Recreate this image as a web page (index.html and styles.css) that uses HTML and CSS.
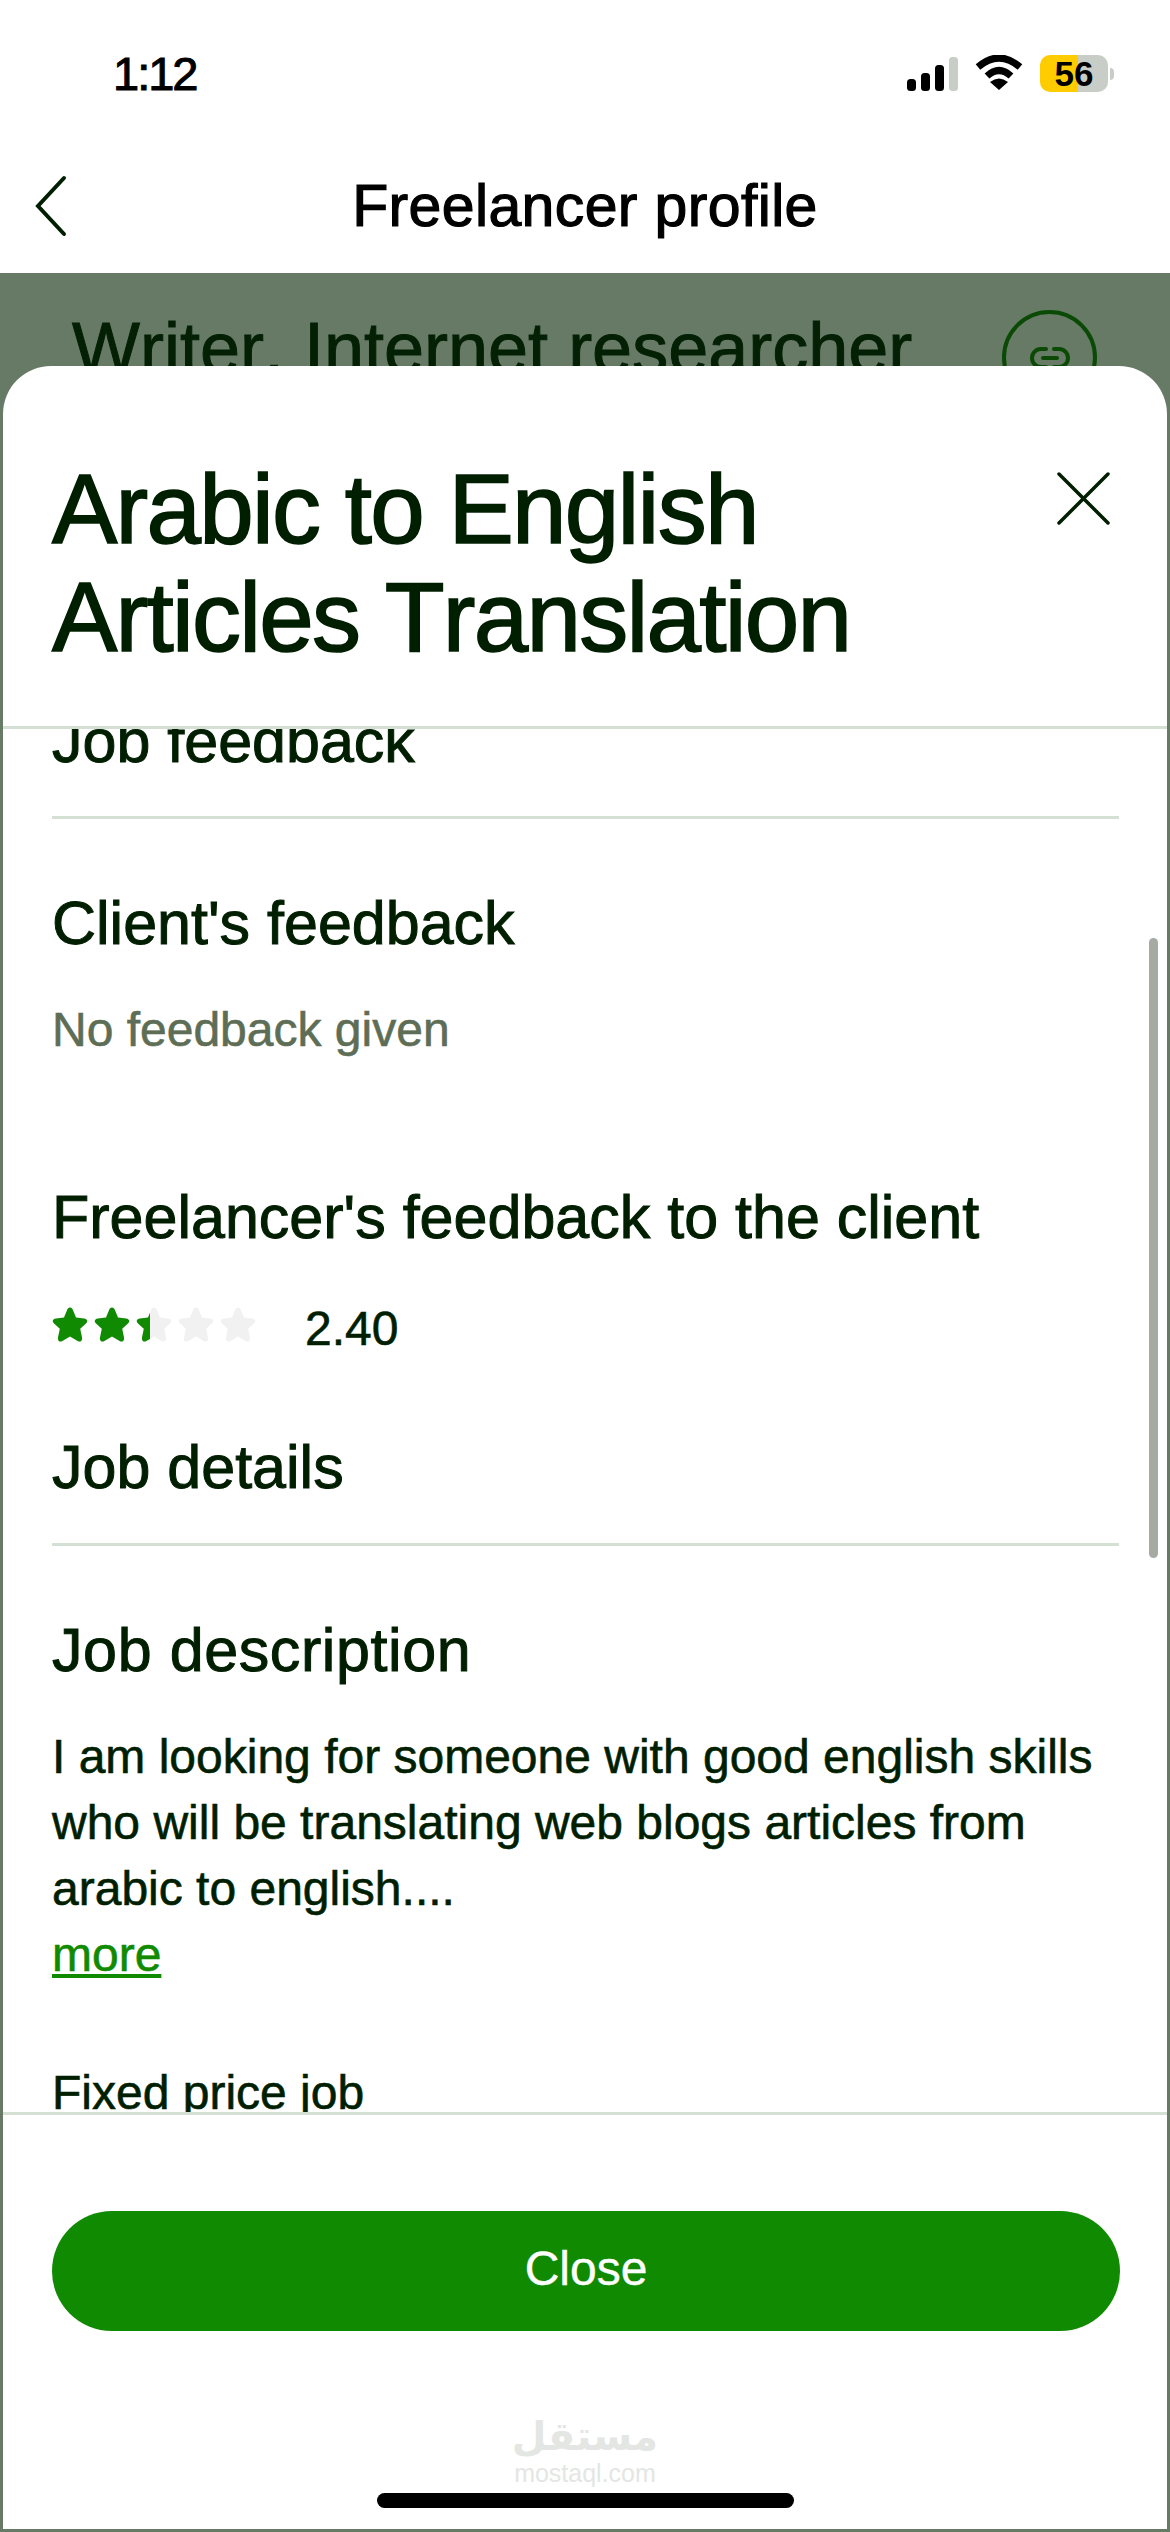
FILE: index.html
```html
<!DOCTYPE html>
<html lang="en">
<head>
    <meta charset="UTF-8">
    <meta name="viewport" content="width=device-width, initial-scale=1.0">
    <title>Freelancer profile</title>
    <link rel="stylesheet" href="styles.css">
</head>
<body>
    <div class="screen">
        <div class="status-bar">
            <span class="time">1:12</span>
            <div class="status-icons">
                <svg class="signal" width="51" height="34" viewBox="0 0 51 34">
                    <rect x="0" y="22" width="9" height="12" rx="3.5" fill="#000"/>
                    <rect x="14" y="16" width="9" height="18" rx="3.5" fill="#000"/>
                    <rect x="28" y="8" width="9" height="26" rx="3.5" fill="#000"/>
                    <rect x="42" y="0" width="9" height="34" rx="3.5" fill="#c8cdc7"/>
                </svg>
                <svg class="wifi" width="48" height="36" viewBox="0 0 48 36">
                    <path d="M3 12 Q24 -6 45 12" fill="none" stroke="#000" stroke-width="7" stroke-linejoin="round"/>
                    <path d="M12 21 Q24 10 36 21" fill="none" stroke="#000" stroke-width="7"/>
                    <path d="M24 35 L15 27 Q24 20 33 27 Z" fill="#000"/>
                </svg>
                <div class="battery">
                    <div class="battery-body"><span class="battery-level">56</span></div>
                    <div class="battery-cap"></div>
                </div>
            </div>
        </div>
        <div class="nav-bar">
            <svg class="back" width="32" height="62" viewBox="0 0 32 62">
                <path d="M29 3 L3 31 L29 59" fill="none" stroke="#001e00" stroke-width="4" stroke-linecap="round"/>
            </svg>
            <h2 class="nav-title">Freelancer profile</h2>
        </div>

        <div class="backdrop">
            <div class="backdrop-row">
                <h1 class="backdrop-title">Writer, Internet researcher</h1>
                <div class="link-circle">
                    <svg width="40" height="24" viewBox="0 0 40 24">
                        <path d="M16 3 H11 A9 9 0 0 0 11 21 H16 M24 3 H29 A9 9 0 0 1 29 21 H24 M13 12 H27" fill="none" stroke="#0a4a05" stroke-width="4" stroke-linecap="round"/>
                    </svg>
                </div>
            </div>
        </div>
        <div class="backdrop-peek">Namaste</div>

        <div class="sheet">
            <div class="sheet-header">
                <h1 class="sheet-title">Arabic to English Articles Translation</h1>
                <svg class="close-x" width="53" height="53" viewBox="0 0 53 53">
                    <path d="M2 2 L51 51 M51 2 L2 51" fill="none" stroke="#001e00" stroke-width="3.5" stroke-linecap="round"/>
                </svg>
            </div>

            <div class="sheet-body">
                <div class="scroll-content">
                    <div class="section-head">Job feedback</div>

                    <h3 class="sub-head first">Client's feedback</h3>
                    <p class="muted">No feedback given</p>

                    <h3 class="sub-head second">Freelancer's feedback to the client</h3>
                    <div class="rating">
                        <div class="stars">
                            <div class="stars-row stars-empty">
                                <svg viewBox="0 0 36 36"><use href="#star"/></svg>
                                <svg viewBox="0 0 36 36"><use href="#star"/></svg>
                                <svg viewBox="0 0 36 36"><use href="#star"/></svg>
                                <svg viewBox="0 0 36 36"><use href="#star"/></svg>
                                <svg viewBox="0 0 36 36"><use href="#star"/></svg>
                            </div>
                            <div class="stars-fill" style="width: 48%">
                                <div class="stars-row">
                                    <svg viewBox="0 0 36 36"><use href="#star"/></svg>
                                    <svg viewBox="0 0 36 36"><use href="#star"/></svg>
                                    <svg viewBox="0 0 36 36"><use href="#star"/></svg>
                                    <svg viewBox="0 0 36 36"><use href="#star"/></svg>
                                    <svg viewBox="0 0 36 36"><use href="#star"/></svg>
                                </div>
                            </div>
                        </div>
                        <span class="rating-value">2.40</span>
                    </div>

                    <div class="section-head details">Job details</div>

                    <h3 class="sub-head first job-desc">Job description</h3>
                    <p class="description">I am looking for someone with good english skills who will be translating web blogs articles from arabic to english....</p>
                    <a class="more" href="#">more</a>
                    <p class="job-type">Fixed price job</p>
                </div>
                <div class="scrollbar"></div>
            </div>

            <div class="sheet-footer">
                <button class="close-btn" type="button">Close</button>
                <div class="watermark">
                    <span class="wm-arabic" lang="ar" dir="rtl">مستقل</span>
                    <span class="wm-latin">mostaql.com</span>
                </div>
                <div class="home-indicator"></div>
            </div>
        </div>
    </div>

    <svg width="0" height="0" class="defs">
        <defs>
            <path id="star" d="M18 0.5 C19.5 0.5 20.3 1.6 21 3.2 L24 10.6 L32 11.4 C35 11.7 36.4 14.2 34.2 16.2 L28.2 21.8 L30 30.4 C30.6 33.6 28.4 35.6 25.6 34 L18 29.6 L10.4 34 C7.6 35.6 5.4 33.6 6 30.4 L7.8 21.8 L1.8 16.2 C-0.4 14.2 1 11.7 4 11.4 L12 10.6 L15 3.2 C15.7 1.6 16.5 0.5 18 0.5 Z"/>
        </defs>
    </svg>
</body>
</html>
```

FILE: styles.css
```css
* {
    box-sizing: border-box;
}
html, body {
    margin: 0;
    padding: 0;
}
body {
    font-family: "Liberation Sans", Arial, sans-serif;
    font-kerning: none;
    color: #001e00;
    background: #fff;
}
h1, h2, h3, p {
    margin: 0;
    font-weight: 400;
}
.defs {
    position: absolute;
}
.screen {
    position: relative;
    width: 1170px;
    height: 2532px;
    overflow: hidden;
    background: #677a66;
}

/* status bar */
.status-bar {
    height: 120px;
    background: #fff;
    display: flex;
    justify-content: space-between;
    padding: 50px 0 0 113px;
}
.time {
    font-size: 47px;
    line-height: 48px;
    color: #000;
    letter-spacing: -2px;
    -webkit-text-stroke: 1px #000;
}
.status-icons {
    display: flex;
    align-items: flex-start;
    padding-right: 56px;
}
.signal {
    margin-top: 7px;
}
.wifi {
    margin: 5px 0 0 17px;
}
.battery {
    display: flex;
    align-items: center;
    margin: 5px 0 0 17px;
}
.battery-body {
    width: 68px;
    height: 37px;
    border-radius: 10px;
    background: linear-gradient(to right, #ffcc00 56%, #c8cdc7 56%);
    display: flex;
    align-items: center;
    justify-content: center;
}
.battery-level {
    font-size: 35px;
    font-weight: 700;
    color: #000;
}
.battery-cap {
    width: 4px;
    height: 12px;
    margin-left: 2px;
    border-radius: 0 6px 6px 0;
    background: #c8cdc7;
}

/* nav */
.nav-bar {
    height: 153px;
    background: #fff;
    position: relative;
    display: flex;
    justify-content: center;
    padding-top: 53px;
}
.back {
    position: absolute;
    left: 35px;
    top: 55px;
}
.nav-title {
    font-size: 59px;
    line-height: 66px;
    color: #000;
    letter-spacing: 0.36px;
    -webkit-text-stroke: 1.2px #000;
}

/* page behind the sheet */
.backdrop-row {
    display: flex;
    justify-content: space-between;
    padding: 37px 73px 0 72px;
}
.backdrop-title {
    font-size: 72px;
    line-height: 76px;
    white-space: nowrap;
    color: #042004;
    -webkit-text-stroke: 1px #042004;
}
.link-circle {
    width: 95px;
    height: 95px;
    border: 4px solid #0a4a05;
    border-radius: 50%;
    display: flex;
    align-items: center;
    justify-content: center;
}
.backdrop-peek {
    position: absolute;
    left: 75px;
    top: 2518px;
    font-size: 72px;
    line-height: 80px;
    color: #042004;
}

/* sheet */
.sheet {
    position: absolute;
    left: 3px;
    right: 3px;
    top: 366px;
    bottom: 3px;
    background: #fff;
    border-radius: 48px 48px 0 0;
    display: flex;
    flex-direction: column;
}
.sheet-header {
    height: 363px;
    padding: 89px 57px 0 49px;
    display: flex;
    justify-content: space-between;
    align-items: flex-start;
    border-bottom: 3px solid #d5e0d5;
}
.sheet-title {
    width: 860px;
    font-size: 98px;
    line-height: 108px;
    letter-spacing: -1.75px;
    -webkit-text-stroke: 1.6px #001e00;
}
.close-x {
    margin-top: 17px;
}
.sheet-body {
    position: relative;
    height: 1383px;
    overflow: hidden;
}
.scroll-content {
    margin-top: -23px;
    padding: 0 48px 0 49px;
}
.section-head {
    font-size: 61px;
    line-height: 70px;
    padding-bottom: 40px;
    border-bottom: 3px solid #d5e0d5;
    -webkit-text-stroke: 1px #001e00;
}
.sub-head {
    font-size: 61px;
    line-height: 70px;
    -webkit-text-stroke: 1px #001e00;
}
.sub-head.first {
    margin-top: 69px;
}
.sub-head.second {
    margin-top: 122px;
}
.job-desc {
    letter-spacing: 0.6px;
}
.muted {
    margin-top: 42px;
    font-size: 48px;
    line-height: 60px;
    color: #5e6d55;
    -webkit-text-stroke: 0.6px #5e6d55;
}
.rating {
    display: flex;
    align-items: center;
    margin-top: 45px;
}
.stars {
    position: relative;
    width: 204px;
    height: 36px;
    margin-top: -6px;
}
.stars-row {
    display: flex;
    gap: 6px;
    width: 204px;
}
.stars-row svg {
    width: 36px;
    height: 36px;
    flex: none;
    fill: #108a00;
}
.stars-empty svg {
    fill: #f0f1f0;
}
.stars-fill {
    position: absolute;
    left: 0;
    top: 0;
    height: 36px;
    overflow: hidden;
}
.rating-value {
    margin-left: 49px;
    padding-top: 2px;
    font-size: 48px;
    line-height: 60px;
    -webkit-text-stroke: 0.6px #001e00;
}
.section-head.details {
    margin-top: 73px;
    padding-bottom: 41px;
}
.description {
    margin-top: 39px;
    font-size: 48px;
    line-height: 66px;
    -webkit-text-stroke: 0.6px #001e00;
}
.more {
    display: block;
    font-size: 48px;
    line-height: 66px;
    color: #108a00;
    text-decoration: underline;
    -webkit-text-stroke: 0.6px #108a00;
}
.job-type {
    margin-top: 72px;
    font-size: 48px;
    line-height: 66px;
    -webkit-text-stroke: 0.6px #001e00;
}
.scrollbar {
    position: absolute;
    right: 9px;
    top: 209px;
    width: 9px;
    height: 620px;
    border-radius: 5px;
    background: #a5aba3;
}

/* footer */
.sheet-footer {
    position: relative;
    flex: 1;
    border-top: 3px solid #d5e0d5;
    padding: 96px 47px 0 49px;
}
.close-btn {
    display: block;
    width: 100%;
    height: 120px;
    padding: 0 0 6px;
    border: none;
    border-radius: 60px;
    background: #108a00;
    color: #fff;
    font-family: inherit;
    font-size: 48px;
    -webkit-text-stroke: 0.4px #fff;
}
.watermark {
    position: absolute;
    left: 0;
    right: 0;
    top: 296px;
    display: flex;
    flex-direction: column;
    align-items: center;
    color: #e3e6e3;
    font-family: "DejaVu Sans", sans-serif;
}
.wm-arabic {
    font-size: 40px;
    font-weight: 700;
    line-height: 50px;
}
.wm-latin {
    font-family: "Liberation Sans", sans-serif;
    font-size: 25px;
    line-height: 24px;
}
.home-indicator {
    position: absolute;
    left: 374px;
    bottom: 21px;
    width: 417px;
    height: 15px;
    border-radius: 8px;
    background: #000;
}
```
